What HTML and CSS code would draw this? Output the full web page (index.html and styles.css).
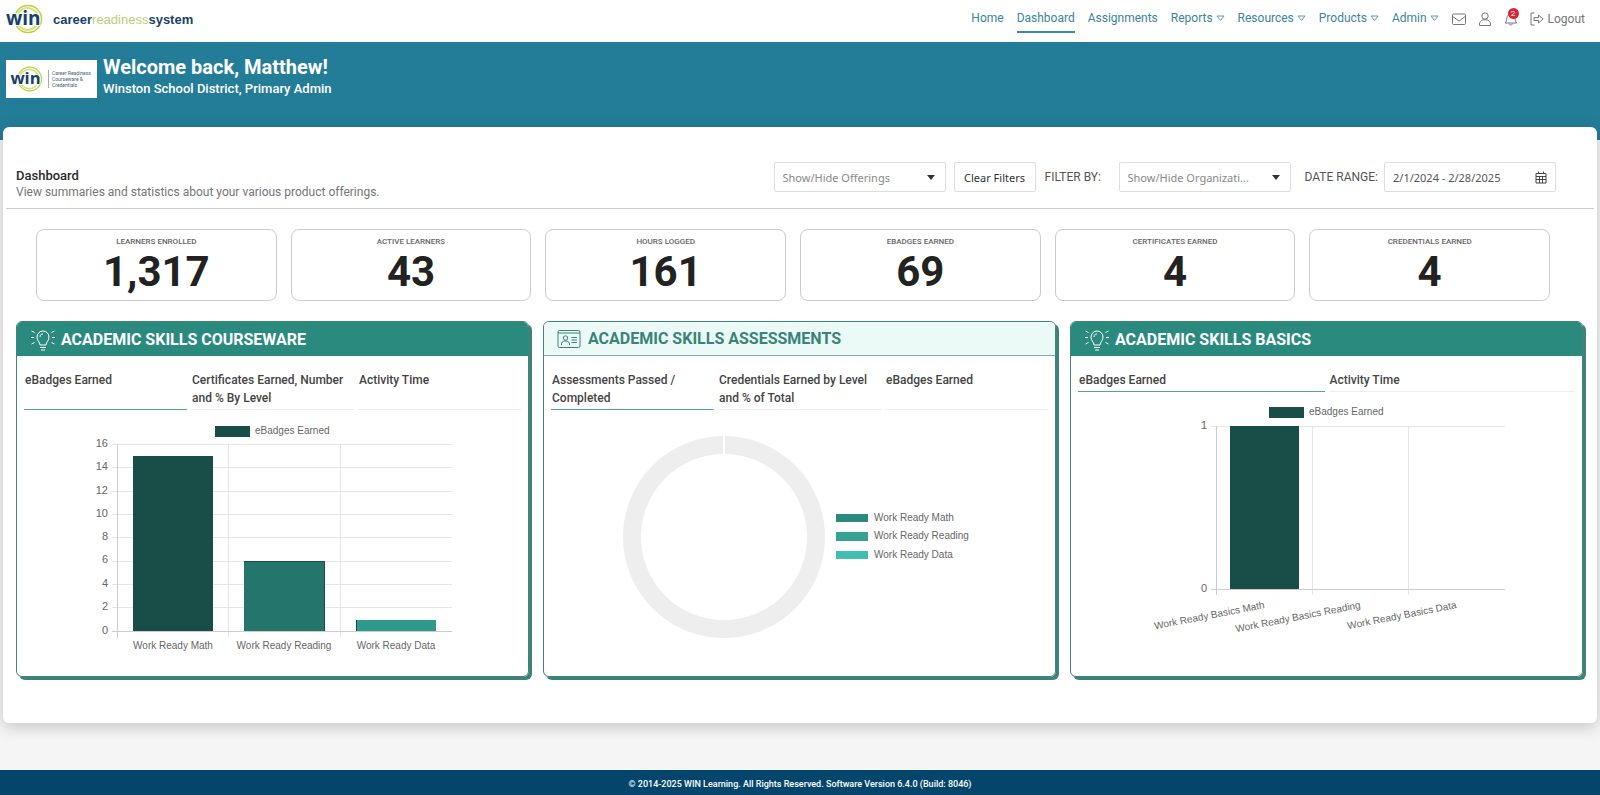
FILE: index.html
```
<!DOCTYPE html>
<html lang="en">
<head>
    <meta charset="UTF-8">
    <meta name="viewport" content="width=device-width, initial-scale=1.0">
    <title>WIN Career Readiness System - Dashboard</title>
    <link rel="stylesheet" href="styles.css">
</head>
<body>
    <!-- Top bar -->
    <header class="topbar">
        <a href="#" class="brand" aria-label="WIN Career Readiness System">
            <svg class="win-logo" viewBox="0 0 38 32" width="38" height="32">
                <circle cx="22" cy="16" r="13.500" fill="none" stroke="#b9d23f" stroke-width="1.500"/>
                <circle cx="21.500" cy="16" r="11" fill="none" stroke="#d5e480" stroke-width="2"/>
                <text class="win-halo" x="0" y="22">win</text>
                <text class="win-text" x="0" y="22">win</text>
            </svg>
            <span class="brand-name"><b>career</b><span>readiness</span><b>system</b></span>
        </a>

        <nav class="nav">
            <a href="#">Home</a>
            <a href="#" class="active">Dashboard</a>
            <a href="#">Assignments</a>
            <a href="#">Reports <svg class="caret" viewBox="0 0 9 7"><path d="M1 1h7L4.500 5.500z"/></svg></a>
            <a href="#">Resources <svg class="caret" viewBox="0 0 9 7"><path d="M1 1h7L4.500 5.500z"/></svg></a>
            <a href="#">Products <svg class="caret" viewBox="0 0 9 7"><path d="M1 1h7L4.500 5.500z"/></svg></a>
            <a href="#">Admin <svg class="caret" viewBox="0 0 9 7"><path d="M1 1h7L4.500 5.500z"/></svg></a>
        </nav>

        <div class="tools">
            <a href="#" aria-label="Messages">
                <svg viewBox="0 0 14 14" width="14" height="14"><rect x=".5" y="2" width="13" height="10.500" rx="1"/><path d="M.8 4.500L7 9l6.200-4.500"/></svg>
            </a>
            <a href="#" aria-label="Profile">
                <svg viewBox="0 0 14 14" width="14" height="14"><circle cx="7" cy="4" r="3.200"/><path d="M1.500 13.500v-1.500c0-2 1.500-3.500 3.500-4.200h4c2 .7 3.500 2.200 3.500 4.200v1.500z"/></svg>
            </a>
            <a href="#" class="bell" aria-label="Notifications">
                <svg viewBox="0 0 14 14" width="14" height="14"><path d="M1 11c1.500-1.200 1.500-2.500 1.800-5C3.200 3.500 4.800 2 6.800 2s3.800 1.500 4.200 4c.3 2.500.3 3.800 1.800 5z"/><path d="M5 11.500c.3 2 3.300 2 3.600 0"/></svg>
                <span class="badge">2</span>
            </a>
            <a href="#" class="logout">
                <svg viewBox="0 0 14 14" width="14" height="14"><path d="M4.500 1H1v12h3.500"/><path d="M4 5.500h4.500V3L13 7l-4.500 4V8.500H4z"/></svg>
                Logout
            </a>
        </div>
    </header>

    <!-- Welcome banner -->
    <section class="banner">
        <div class="org-logo">
            <svg class="win-logo" viewBox="0 0 38 32" width="34" height="28">
                <circle cx="22" cy="16" r="13.500" fill="none" stroke="#b9d23f" stroke-width="1.500"/>
                <circle cx="21.500" cy="16" r="11" fill="none" stroke="#d5e480" stroke-width="2"/>
                <text class="win-halo" x="0" y="22">win</text>
                <text class="win-text" x="0" y="22">win</text>
            </svg>
            <p>Career Readiness<br>Courseware &amp;<br>Credentials</p>
        </div>
        <div>
            <h1>Welcome back, Matthew!</h1>
            <p class="org-name">Winston School District, Primary Admin</p>
        </div>
    </section>

    <main class="page">
        <div class="page-head">
            <div>
                <h2>Dashboard</h2>
                <p>View summaries and statistics about your various product offerings.</p>
            </div>
            <form class="filters">
                <div class="select">
                    <select aria-label="Offerings"><option>Show/Hide Offerings</option></select>
                </div>
                <button type="button" class="clear">Clear Filters</button>
                <label for="organization" class="org-label">FILTER BY:</label>
                <div class="select">
                    <select id="organization"><option>Show/Hide Organizati...</option></select>
                </div>
                <label for="dates" class="date-label">DATE RANGE:</label>
                <div class="date">
                    <input type="text" id="dates" value="2/1/2024 - 2/28/2025">
                    <svg viewBox="0 0 12 13" width="12" height="13"><path d="M1 2.500h10v9.500H1z M1 5.500h10 M1 8.500h10 M4.500 5.500V12 M7.500 5.500V12 M3.500 .5v2 M8.500 .5v2"/></svg>
                </div>
            </form>
        </div>

        <!-- Totals -->
        <div class="stats">
            <div class="stat"><h3>LEARNERS ENROLLED</h3><p>1,317</p></div>
            <div class="stat"><h3>ACTIVE LEARNERS</h3><p>43</p></div>
            <div class="stat"><h3>HOURS LOGGED</h3><p>161</p></div>
            <div class="stat"><h3>EBADGES EARNED</h3><p>69</p></div>
            <div class="stat"><h3>CERTIFICATES EARNED</h3><p>4</p></div>
            <div class="stat"><h3>CREDENTIALS EARNED</h3><p>4</p></div>
        </div>

        <div class="panels">
            <!-- Courseware -->
            <section class="panel">
                <h2 class="panel-head">
                    <svg viewBox="0 0 26 24" width="26" height="24"><path d="M10 18c0-3-3-4-3-8a6 6 0 0 1 12 0c0 4-3 5-3 8z M10 20.500h6 M11 23h4 M10 10c0-2 1-3 3-3 M1 10.500h3 M22 10.500h3 M1.500 4l3 1.500 M24.500 4l-3 1.500 M1.500 17l3-1.500 M24.500 17l-3-1.500"/></svg>
                    ACADEMIC SKILLS COURSEWARE
                </h2>
                <div class="tabs">
                    <button type="button" class="active">eBadges Earned</button>
                    <button type="button">Certificates Earned, Number and % By Level</button>
                    <button type="button">Activity Time</button>
                </div>
                <svg class="chart" viewBox="0 0 511 266">
                    <rect x="198" y="16" width="35" height="11" fill="#194d47"/>
                    <text x="238" y="24">eBadges Earned</text>
                    <path class="grid" d="M95 34.500h340 M95 57.500h340 M95 81.500h340 M95 104.500h340 M95 127.500h340 M95 151.500h340 M95 174.500h340 M95 197.500h340 M211.500 34v194 M323.500 34v194"/>
                    <path class="axis" d="M95 221.500h340 M100.500 34v194"/>
                    <g class="ticks">
                        <text x="91" y="37">16</text>
                        <text x="91" y="60">14</text>
                        <text x="91" y="84">12</text>
                        <text x="91" y="107">10</text>
                        <text x="91" y="130">8</text>
                        <text x="91" y="153">6</text>
                        <text x="91" y="177">4</text>
                        <text x="91" y="200">2</text>
                        <text x="91" y="224">0</text>
                    </g>
                    <rect x="116" y="46" width="80" height="175" fill="#194d47"/>
                    <rect x="227" y="151" width="81" height="70" fill="#24756b"/>
                    <path d="M227 151.500h80.500v69.500" fill="none" stroke="#194d47"/>
                    <rect x="339" y="210" width="80" height="11" fill="#2e9a8c"/>
                    <path d="M339.500 221v-11" stroke="#194d47"/>
                    <g class="labels">
                        <text x="156" y="239">Work Ready Math</text>
                        <text x="267" y="239">Work Ready Reading</text>
                        <text x="379" y="239">Work Ready Data</text>
                    </g>
                </svg>
            </section>

            <!-- Assessments -->
            <section class="panel light">
                <h2 class="panel-head">
                    <svg viewBox="0 0 26 24" width="26" height="24"><rect x="1" y="3.500" width="22" height="17" rx="1.500"/><path d="M1 6h22"/><circle cx="8.500" cy="11" r="2.200"/><path d="M4.500 18v-1c0-1.500 1.200-2.500 2.500-3h3c1.300.5 2.500 1.500 2.500 3v1 M14.500 10.500H20 M14.500 13H20 M14.500 15.500H20"/></svg>
                    ACADEMIC SKILLS ASSESSMENTS
                </h2>
                <div class="tabs">
                    <button type="button" class="active">Assessments Passed / Completed</button>
                    <button type="button">Credentials Earned by Level and % of Total</button>
                    <button type="button">eBadges Earned</button>
                </div>
                <svg class="chart" viewBox="0 0 511 266">
                    <circle cx="180" cy="127" r="92" fill="none" stroke="#eee" stroke-width="18"/>
                    <path d="M180 25v20" stroke="#fff" stroke-width="2"/>
                    <rect x="292" y="104" width="32" height="8" fill="#2b8a7e"/>
                    <rect x="292" y="122" width="32" height="9" fill="#37a393"/>
                    <rect x="292" y="141" width="32" height="8" fill="#42beb0"/>
                    <text x="330" y="111">Work Ready Math</text>
                    <text x="330" y="129">Work Ready Reading</text>
                    <text x="330" y="148">Work Ready Data</text>
                </svg>
            </section>

            <!-- Basics -->
            <section class="panel">
                <h2 class="panel-head">
                    <svg viewBox="0 0 26 24" width="26" height="24"><path d="M10 18c0-3-3-4-3-8a6 6 0 0 1 12 0c0 4-3 5-3 8z M10 20.500h6 M11 23h4 M10 10c0-2 1-3 3-3 M1 10.500h3 M22 10.500h3 M1.500 4l3 1.500 M24.500 4l-3 1.500 M1.500 17l3-1.500 M24.500 17l-3-1.500"/></svg>
                    ACADEMIC SKILLS BASICS
                </h2>
                <div class="tabs two">
                    <button type="button" class="active">eBadges Earned</button>
                    <button type="button">Activity Time</button>
                </div>
                <svg class="chart" viewBox="0 0 511 266">
                    <rect x="198" y="15" width="35" height="11" fill="#194d47"/>
                    <text x="238" y="23">eBadges Earned</text>
                    <path class="grid" d="M140 34.500h294 M241.500 34v169 M337.500 34v169"/>
                    <path class="axis" d="M140 197.500h294 M145.500 34v169"/>
                    <g class="ticks">
                        <text x="136" y="37">1</text>
                        <text x="136" y="200">0</text>
                    </g>
                    <rect x="159" y="34" width="69" height="163" fill="#194d47"/>
                    <g class="slanted">
                        <text transform="translate(194 216) rotate(-11)">Work Ready Basics Math</text>
                        <text transform="translate(290 216) rotate(-11)">Work Ready Basics Reading</text>
                        <text transform="translate(386 216) rotate(-11)">Work Ready Basics Data</text>
                    </g>
                </svg>
            </section>
        </div>
    </main>

    <footer class="footer">© 2014-2025 WIN Learning. All Rights Reserved. Software Version 6.4.0 (Build: 8046)</footer>
</body>
</html>
```
FILE: styles.css
```
* {
    box-sizing: border-box;
}

body {
    font-family: Roboto, 'Liberation Sans', sans-serif;
    font-size: 12px;
    margin: 0;
    min-height: 100vh;
    display: flex;
    flex-direction: column;
    background: #f5f5f5;
    color: #2b2b2b;
}

h1, h2, h3, p {
    margin: 0;
}

a {
    color: inherit;
    text-decoration: none;
}

button, input, select {
    font-family: inherit;
    font-size: inherit;
    color: inherit;
}

/* Top bar */
.topbar {
    display: flex;
    align-items: center;
    height: 42px;
    padding: 0 15px 4px 6px;
    background: #fff;
}

.brand {
    display: flex;
    align-items: center;
    gap: 9px;
    margin-right: auto;
}

.brand-name {
    font: 13px 'Liberation Sans', sans-serif;
    color: #b9cf78;
}

.brand-name b {
    color: #1b4167;
}

.win-text, .win-halo {
    font: bold 19px 'Open Sans', sans-serif;
    fill: #17406a;
}

.win-halo {
    stroke: #fff;
    stroke-width: 2px;
}

.nav {
    display: flex;
    gap: 13px;
    color: #3b8498;
}

.nav a {
    padding: 4px 0 5px;
    line-height: 16px;
    border-bottom: 2px solid transparent;
}

.nav a.active {
    border-bottom-color: #3f85a5;
}

.caret {
    width: 9px;
    height: 7px;
    fill: none;
    stroke: #5f9aaa;
}

.tools {
    display: flex;
    align-items: center;
    gap: 12px;
    margin-left: 13px;
    color: #777;
}

.tools a {
    display: flex;
    align-items: center;
    gap: 4px;
    position: relative;
}

.tools svg {
    fill: none;
    stroke: #777;
}

.badge {
    position: absolute;
    top: -4px;
    right: -1px;
    width: 11px;
    height: 11px;
    border-radius: 50%;
    background: #dc2436;
    color: #fff;
    font-size: 8px;
    line-height: 11px;
    text-align: center;
}

/* Banner */
.banner {
    display: flex;
    align-items: flex-start;
    gap: 6px;
    height: 98px;
    padding: 14px 6px;
    background: #247d98;
    color: #fff;
}

.org-logo {
    display: flex;
    align-items: center;
    gap: 4px;
    width: 91px;
    height: 38px;
    margin-top: 4px;
    padding-left: 4px;
    background: #fff;
}

.org-logo p {
    padding-left: 3px;
    border-left: 1px solid #aaa;
    font-size: 5px;
    line-height: 6px;
    color: #47617c;
}

.banner h1 {
    font-size: 20px;
    line-height: 22px;
}

.org-name {
    font-size: 13px;
    font-weight: 500;
    line-height: 22px;
}

/* Page */
.page {
    margin: -13px 3px 46px;
    padding: 35px 3px 46px;
    background: #fff;
    border-radius: 6px;
    box-shadow: 0 4px 16px rgba(0, 0, 0, 0.2);
}

.page-head {
    display: flex;
    justify-content: space-between;
    align-items: flex-end;
    padding: 0 38px 6px 10px;
    border-bottom: 1px solid #ccc;
}

.page-head h2 {
    font-size: 13px;
    font-weight: 500;
    line-height: 16px;
}

.page-head p {
    line-height: 16px;
    padding-bottom: 2px;
    color: #757575;
}

.filters {
    display: flex;
    align-items: center;
    padding-bottom: 10px;
    color: #555;
}

.select, .date {
    position: relative;
    width: 172px;
}

.select::after {
    content: '';
    position: absolute;
    right: 11px;
    top: 13px;
    border: 4px solid transparent;
    border-top: 5px solid #333;
    border-bottom: 0;
}

.filters select, .filters input, .clear {
    display: block;
    width: 100%;
    height: 30px;
    padding: 0 8px;
    border: 1px solid #ddd;
    border-radius: 2px;
    background: #fff;
    font-family: 'Noto Sans', sans-serif;
    font-size: 11px;
    appearance: none;
}

.filters select {
    color: #888;
}

.filters .clear {
    width: 82px;
    margin: 0 9px 0 8px;
    color: #333;
}

.org-label {
    width: 74px;
}

.date-label {
    margin: 0 6px 0 14px;
}

.date svg {
    position: absolute;
    right: 9px;
    top: 9px;
    fill: none;
    stroke: #444;
}

.stats {
    display: grid;
    grid-template-columns: repeat(6, 1fr);
    gap: 14px;
    padding: 20px 44px 20px 30px;
}

.stat {
    height: 72px;
    padding-top: 7px;
    border: 1px solid #ccc;
    border-radius: 8px;
    text-align: center;
}

.stat h3 {
    font-size: 8px;
    font-weight: 500;
    line-height: 10px;
    color: #666;
}

.stat p {
    font-size: 42px;
    font-weight: 700;
    line-height: 50px;
    color: #222;
}

/* Panels */
.panels {
    display: grid;
    grid-template-columns: repeat(3, 1fr);
    gap: 14px;
    padding: 0 11px 0 10px;
}

.panel {
    min-width: 0;
    border: 1px solid #3f857b;
    border-radius: 6px;
    box-shadow: 3px 3px 0 #3c8378;
}

.panel-head {
    display: flex;
    align-items: center;
    gap: 5px;
    height: 34px;
    padding-left: 13px;
    border-radius: 5px 5px 0 0;
    background: #2b8a7e;
    color: #fff;
    font-size: 16px;
    font-weight: 700;
}

.panel-head svg {
    fill: none;
    stroke: currentColor;
}

.light .panel-head {
    background: #ebf9f7;
    color: #3a8378;
    border-bottom: 1px solid #7fb0a9;
}

.tabs {
    display: grid;
    grid-template-columns: repeat(3, 1fr);
    gap: 4px;
    padding: 15px 7px 0;
}

.tabs.two {
    grid-template-columns: repeat(2, 1fr);
}

.tabs button {
    display: flex;
    padding: 0 1px 2px;
    border: 0;
    border-bottom: 1px solid #eee;
    background: none;
    font-weight: 500;
    line-height: 18px;
    text-align: left;
    color: #444;
    cursor: pointer;
}

.tabs button.active {
    border-bottom-color: #5b9f9b;
}

.chart {
    display: block;
    width: 100%;
    font: 10px 'Liberation Sans', sans-serif;
    fill: #666;
}

.grid {
    stroke: #e6e6e6;
}

.axis {
    stroke: #ccc;
}

.ticks, .slanted {
    text-anchor: end;
}

.ticks {
    font-size: 11px;
}

.labels {
    text-anchor: middle;
}

.footer {
    margin-top: auto;
    height: 25px;
    padding-top: 2px;
    background: #04466b;
    color: #fff;
    font-size: 9px;
    font-weight: 500;
    line-height: 25px;
    text-align: center;
}
```
